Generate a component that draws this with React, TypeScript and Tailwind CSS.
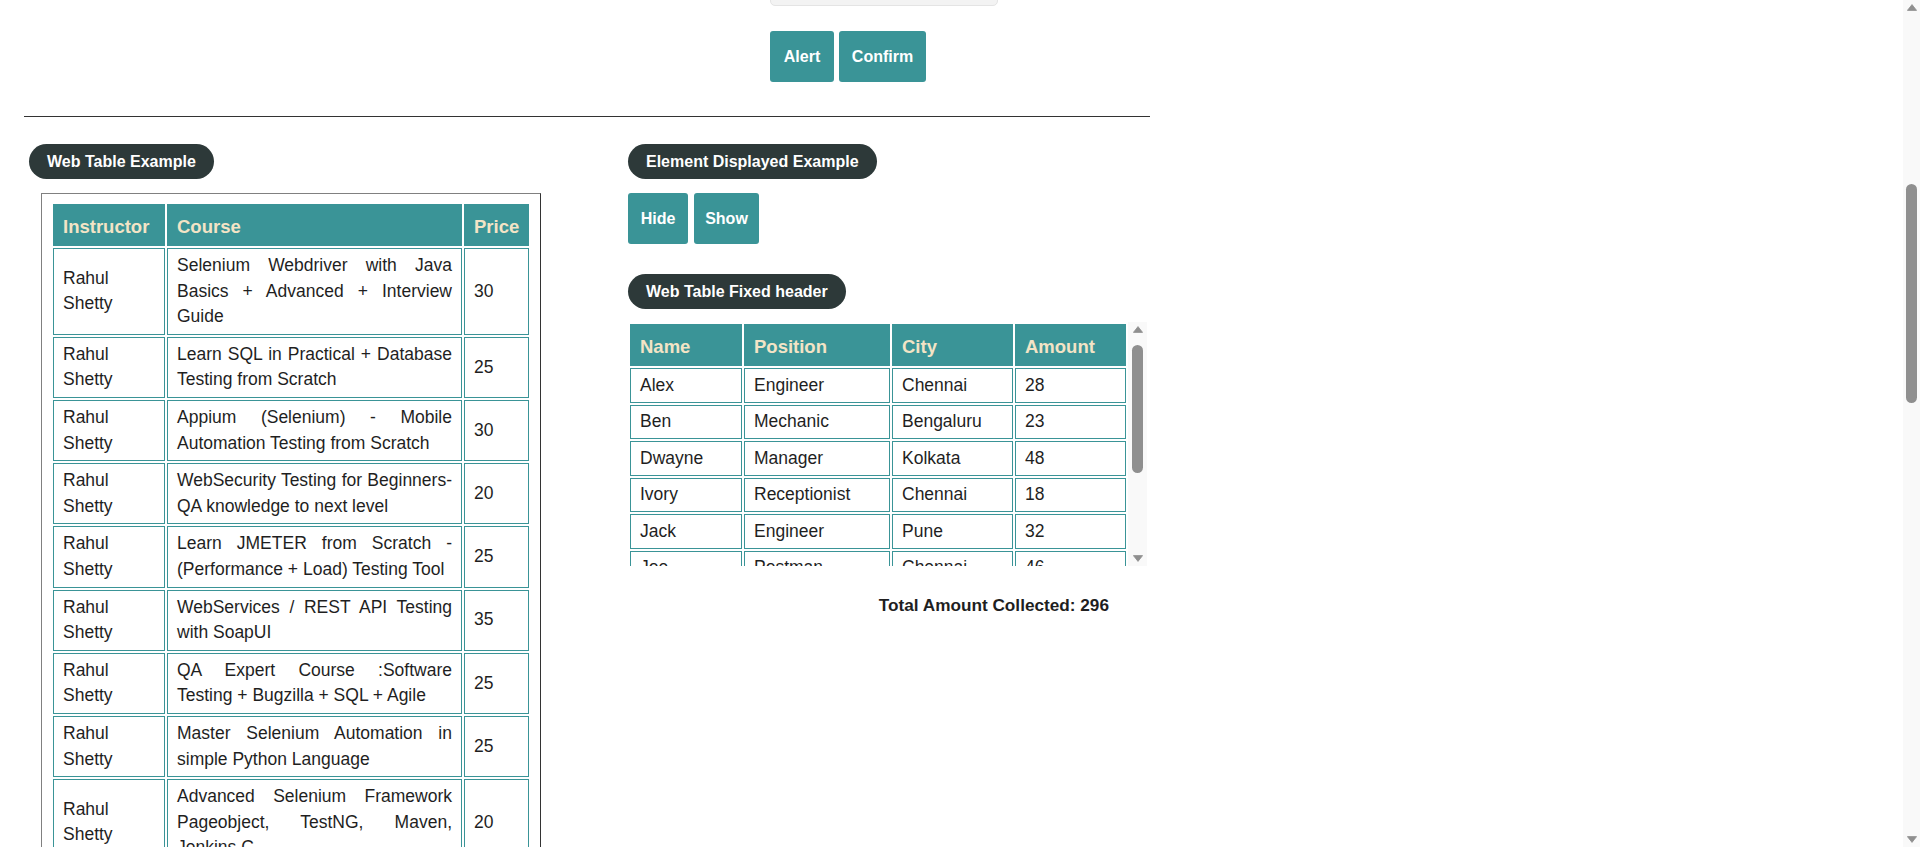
import { useLayoutEffect, useRef } from "react";
import type { ReactNode } from "react";

const courses: [string, string][] = [
  ["Selenium Webdriver with Java Basics + Advanced + Interview Guide", "30"],
  ["Learn SQL in Practical + Database Testing from Scratch", "25"],
  ["Appium (Selenium) - Mobile Automation Testing from Scratch", "30"],
  ["WebSecurity Testing for Beginners-QA knowledge to next level", "20"],
  ["Learn JMETER from Scratch - (Performance + Load) Testing Tool", "25"],
  ["WebServices / REST API Testing with SoapUI", "35"],
  ["QA Expert Course :Software Testing + Bugzilla + SQL + Agile", "25"],
  ["Master Selenium Automation in simple Python Language", "25"],
  ["Advanced Selenium Framework Pageobject, TestNG, Maven, Jenkins,C", "20"],
  ["Write effective QA Resume that will turn to interview call", "0"],
];

const people: [string, string, string, string][] = [
  ["Alex", "Engineer", "Chennai", "28"],
  ["Ben", "Mechanic", "Bengaluru", "23"],
  ["Dwayne", "Manager", "Kolkata", "48"],
  ["Ivory", "Receptionist", "Chennai", "18"],
  ["Jack", "Engineer", "Pune", "32"],
  ["Joe", "Postman", "Chennai", "46"],
  ["Raymond", "Businessman", "Mumbai", "37"],
  ["Ronaldo", "Sportsman", "Chennai", "31"],
  ["Smith", "Cricketer", "Delhi", "33"],
];

function Legend({ children }: { children: ReactNode }) {
  return (
    <div className="flex h-[35px] w-fit items-center rounded-full bg-[#2d3939] px-[18px] text-[16px] font-bold text-white">
      {children}
    </div>
  );
}

function TealButton({ children, width }: { children: ReactNode; width: string }) {
  return (
    <button
      type="button"
      className={`flex h-[51px] items-center justify-center rounded-[3px] bg-[#3a9497] text-[16px] font-bold text-white ${width}`}
    >
      {children}
    </button>
  );
}

function Arrow({ down }: { down?: boolean }) {
  return (
    <div className="flex h-[15px] shrink-0 items-center justify-center">
      <svg width="10" height="7" viewBox="0 0 10 7" className={down ? "rotate-180" : ""}>
        <path d="M5 0.6 L9.6 6.4 L0.4 6.4 Z" fill="#8f8f8f" stroke="#8f8f8f" strokeWidth="0.8" strokeLinejoin="round" />
      </svg>
    </div>
  );
}

function ScrollBar({ width, thumbTop, thumbHeight }: { width: string; thumbTop: string; thumbHeight: string }) {
  return (
    <div className={`flex shrink-0 flex-col bg-[#f9f9f9] ${width}`}>
      <Arrow />
      <div className="flex flex-1 justify-center">
        <div className={`w-[11px] rounded-full bg-[#8f8f8f] ${thumbTop} ${thumbHeight}`} />
      </div>
      <Arrow down />
    </div>
  );
}

const th =
  "border border-[#3a9497] bg-[#3a9497] px-[9px] pt-[10px] pb-[6px] text-left text-[18.5px] font-bold leading-[24px] text-[#f3e4c6]";
const td = "border border-[#3a9497] px-[9px] py-[4px] align-middle text-[17.5px] leading-[25.6px]";
const tdRight = "border border-[#3a9497] px-[9px] py-[3.5px] align-middle text-[17.5px] leading-[25.6px]";

export default function App() {
  const scroller = useRef<HTMLDivElement>(null);
  useLayoutEffect(() => {
    if (scroller.current) scroller.current.scrollTop = 654;
  }, []);

  return (
    <div className="flex h-screen w-full bg-white font-['Liberation_Sans',Arial,sans-serif] text-[#1f1f1f]">
      <div ref={scroller} className="flex-1 overflow-y-scroll [scrollbar-width:none]">
        <div className="min-h-[3160px] w-[1150px] pl-[24px]">
          <div className="h-[620px]" />

          <div className="pl-[746px]">
            <input
              className="block h-[40px] w-[228px] rounded-[5px] border border-[#e4e4e4] bg-[#f3f3f3] px-3 text-[15px]"
              placeholder="Enter Your Name"
              readOnly
            />
            <div className="mt-[25px] flex gap-[5px]">
              <TealButton width="w-[64px]">Alert</TealButton>
              <TealButton width="w-[87px]">Confirm</TealButton>
            </div>
          </div>

          <div className="mt-[34px] h-px bg-[#333]" />

          <div className="mt-[27px] flex">
            <div className="w-[604px] shrink-0 pl-[5px]">
              <Legend>Web Table Example</Legend>
              <div className="ml-[12px] mt-[14px] w-[500px] border border-t-[#808080] border-l-[#808080] border-r-[#333] border-b-[#333] px-[9px] pt-[8px] pb-[9px]">
                <table className="w-[480px] table-fixed border-separate border-spacing-0.5">
                  <thead>
                    <tr>
                      <th className={`${th} w-[112px]`}>Instructor</th>
                      <th className={`${th} w-[295px]`}>Course</th>
                      <th className={`${th} w-[65px]`}>Price</th>
                    </tr>
                  </thead>
                  <tbody>
                    {courses.map(([course, price]) => (
                      <tr key={course}>
                        <td className={td}>Rahul Shetty</td>
                        <td className={`${td} text-justify`}>{course}</td>
                        <td className={td}>{price}</td>
                      </tr>
                    ))}
                  </tbody>
                </table>
              </div>
            </div>

            <div className="w-[522px] shrink-0">
              <Legend>Element Displayed Example</Legend>
              <div className="mt-[14px] flex gap-[6px]">
                <TealButton width="w-[60px]">Hide</TealButton>
                <TealButton width="w-[65px]">Show</TealButton>
              </div>

              <div className="mt-[30px]">
                <Legend>Web Table Fixed header</Legend>
              </div>
              <div className="mt-[13px] flex h-[244px] w-[519px]">
                <div className="w-[500px] overflow-y-auto [scrollbar-width:none]">
                  <table className="w-[500px] table-fixed border-separate border-spacing-0.5">
                    <thead>
                      <tr>
                        <th className={`${th} sticky top-0 w-[112px]`}>Name</th>
                        <th className={`${th} sticky top-0 w-[146px]`}>Position</th>
                        <th className={`${th} sticky top-0 w-[121px]`}>City</th>
                        <th className={`${th} sticky top-0 w-[111px]`}>Amount</th>
                      </tr>
                    </thead>
                    <tbody>
                      {people.map(([name, position, city, amount]) => (
                        <tr key={name}>
                          <td className={tdRight}>{name}</td>
                          <td className={tdRight}>{position}</td>
                          <td className={tdRight}>{city}</td>
                          <td className={tdRight}>{amount}</td>
                        </tr>
                      ))}
                    </tbody>
                  </table>
                </div>
                <ScrollBar width="w-[19px]" thumbTop="mt-[8px]" thumbHeight="h-[128px]" />
              </div>
              <div className="mt-[27px] w-[519px] pr-[38px] text-right text-[17.2px] font-bold leading-[24px]">
                Total Amount Collected: 296
              </div>
            </div>
          </div>
        </div>
      </div>
      <ScrollBar width="w-[17px]" thumbTop="mt-[169px]" thumbHeight="h-[219px]" />
    </div>
  );
}
